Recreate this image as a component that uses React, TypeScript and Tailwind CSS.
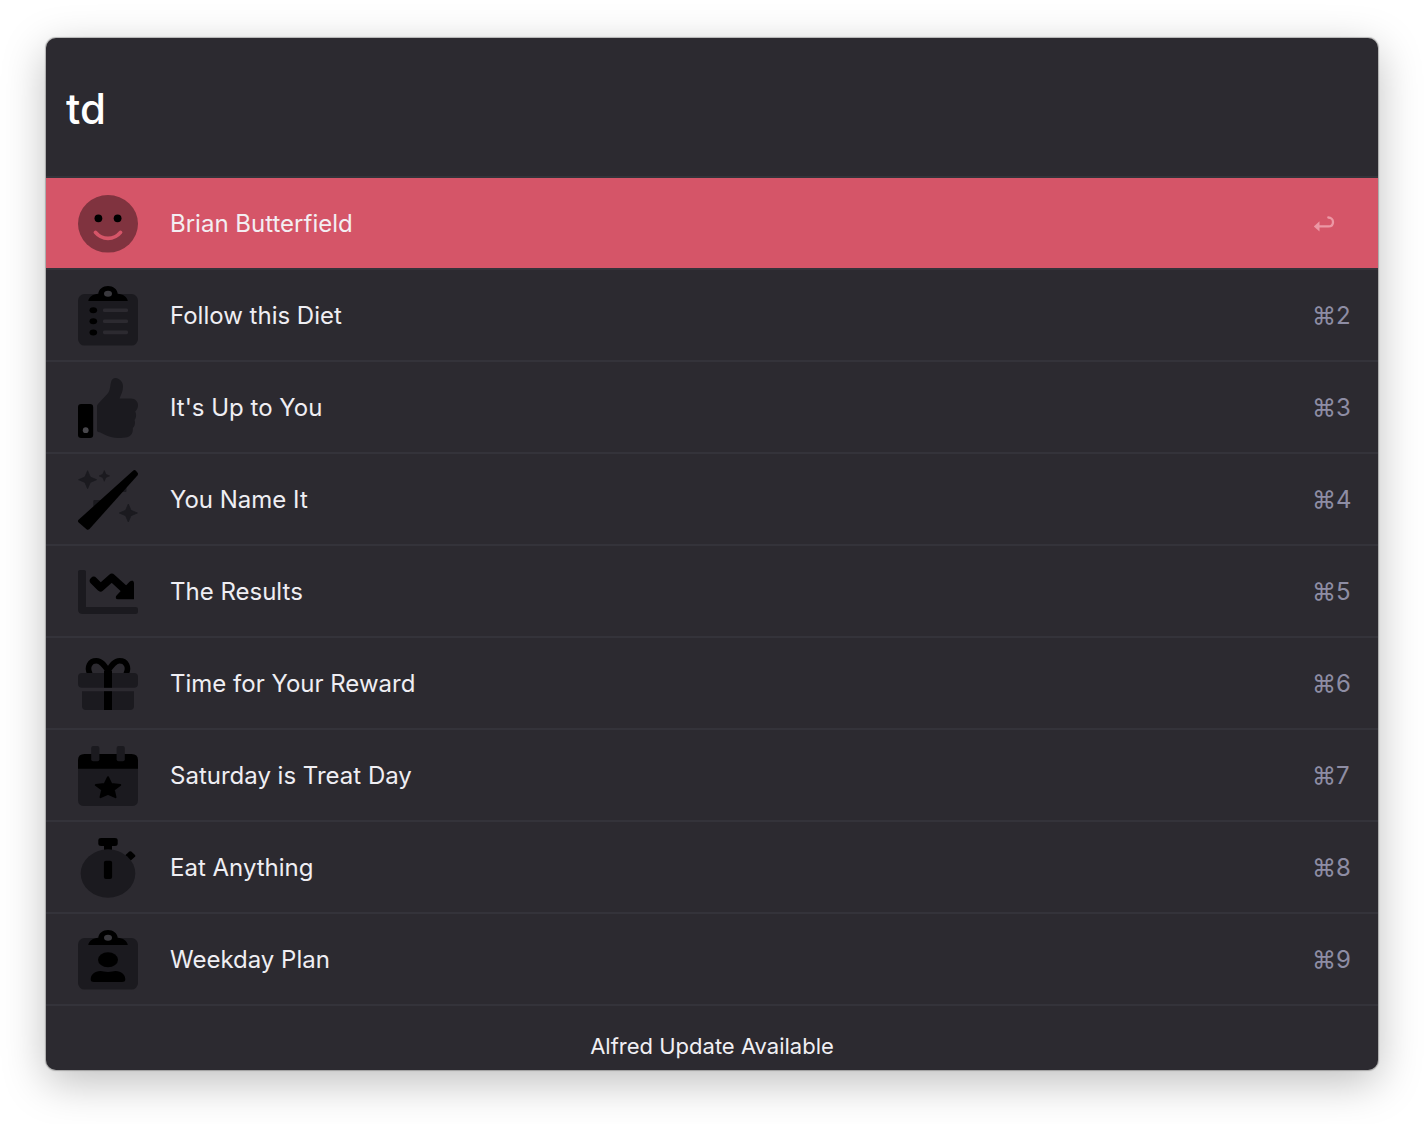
import type { ReactNode } from "react";

const DIM = "#1b1a1f";
const PANEL = "#2c2a30";

function Glyph({ children }: { children: ReactNode }) {
  return (
    <svg viewBox="0 0 60 60" className="size-15 shrink-0" fill="#000" aria-hidden="true">
      {children}
    </svg>
  );
}

function Clip() {
  return (
    <>
      <rect y="8" width="60" height="51.6" rx="6.5" fill={DIM} />
      <path d="M10.3 15C10.8 11 15 8 20.3 7.8C20.5 3.2 25 0 30 0s9.5 3.2 9.7 7.8C45 8 49.2 11 49.8 15Z" />
      <ellipse cx="30" cy="7.7" rx="4" ry="3" fill="#3a393e" />
    </>
  );
}

const star4 = (x: number, y: number, r: number) => {
  const k = r * 0.3;
  return `M${x} ${y - r}L${x + k} ${y - k}L${x + r} ${y}L${x + k} ${y + k}L${x} ${y + r}L${x - k} ${y + k}L${x - r} ${y}L${x - k} ${y - k}Z`;
};

const items: { title: string; icon: ReactNode }[] = [
  {
    title: "Brian Butterfield",
    icon: (
      <Glyph>
        <ellipse cx="30" cy="29.8" rx="30" ry="28.8" fill="#80333f" />
        <circle cx="20.4" cy="24.3" r="3.9" />
        <circle cx="39.6" cy="24.3" r="3.9" />
        <path d="M17.5 38.4C24 46.3 36 46.3 42.5 38.4" fill="none" stroke="#d55568" strokeWidth="3.8" strokeLinecap="round" />
      </Glyph>
    ),
  },
  {
    title: "Follow this Diet",
    icon: (
      <Glyph>
        <Clip />
        {[24.3, 35.3, 46.4].map((y) => (
          <g key={y}>
            <ellipse cx="15.3" cy={y} rx="3.8" ry="3" />
            <rect x="25" y={y - 1.8} width="25" height="3.6" rx="1.4" fill={PANEL} />
          </g>
        ))}
      </Glyph>
    ),
  },
  {
    title: "It's Up to You",
    icon: (
      <Glyph>
        <rect y="26" width="15.2" height="34" rx="3.2" />
        <circle cx="7.7" cy="52.2" r="2.9" fill="#48474c" />
        <path
          fill={DIM}
          d="M19 28.5Q19 27 20.2 25.8L29.5 15.8C32.5 12.2 32 7.5 33.2 3.5C33.8 1.2 35.4 0 37.5 0C42 .6 45 3.8 45 8.5C45 13 43.2 16.5 41.5 20.6H53C57 20.6 60 23.5 60 27.2C60 30 58.8 31.8 57.2 33.5C58.6 36.3 58.3 39.7 56.6 42C57.5 45.2 56.8 48.2 54.8 50C55.3 55.5 52.3 59 47.5 59.5C41.5 60.5 34.5 60.2 28.5 57.5C25.5 56 23 54.5 20.5 54Q19 53.7 19 52.3Z"
        />
      </Glyph>
    ),
  },
  {
    title: "You Name It",
    icon: (
      <Glyph>
        <path d={star4(9.6, 9.7, 9)} fill={DIM} stroke={DIM} strokeWidth="0.8" strokeLinejoin="round" />
        <path d={star4(26.3, 5.9, 5.3)} fill={DIM} stroke={DIM} strokeWidth="0.6" strokeLinejoin="round" />
        <path d={star4(50.3, 43, 9)} fill={DIM} stroke={DIM} strokeWidth="0.8" strokeLinejoin="round" />
        <rect x="15.3" y="30" width="8" height="7" rx="1" fill={DIM} />
        <rect x="40.5" y="15" width="8" height="7" rx="1" fill={DIM} />
        <path d="M55.3.6Q56.7-.5 57.9.7L59.6 2.7Q60.5 4 59.4 5.4L11.5 59Q10 60.3 8.5 59.2L.7 52.6Q-.7 51.2.6 49.7Z" />
      </Glyph>
    ),
  },
  {
    title: "The Results",
    icon: (
      <Glyph>
        <path d="M0 9.5Q0 8 2 8H6Q8 8 8 9.5V45H57.5Q60 45 60 47V50Q60 52 57.5 52H5Q0 52 0 47.5Z" fill={DIM} />
        <path d="M15.7 18.7L22.5 25.6L33.8 15.6L49 29.5" fill="none" stroke="#000" strokeWidth="7.8" strokeLinecap="round" strokeLinejoin="round" />
        <path d="M51.5 19.7Q53.2 18.3 54.8 18.8Q56 19.3 56 21.3V37.3H40Q38 37.3 37.8 35.7Q37.6 34.3 39 33Z" />
      </Glyph>
    ),
  },
  {
    title: "Time for Your Reward",
    icon: (
      <Glyph>
        <path
          d="M12 20C8.3 13 12 6.8 18.3 6.8C23.5 6.8 26.500 11.500 30 17C33.500 11.500 36.500 6.8 41.7 6.8C48 6.8 51.700 13 48 20"
          fill="none"
          stroke="#000"
          strokeWidth="5.6"
        />
        <rect y="19" width="60" height="14.7" rx="4" fill={DIM} />
        <path d="M4 37.2H56V52.3Q56 56 52 56H8Q4 56 4 52.3Z" fill={DIM} />
        <path d="M26 17H34V33.7H26ZM26 37.2H34V56H26Z" />
      </Glyph>
    ),
  },
  {
    title: "Saturday is Treat Day",
    icon: (
      <Glyph>
        <path d="M0 22H60V54Q60 60 53.5 60H6.5Q0 60 0 54Z" fill={DIM} />
        <path d="M0 22.7V14Q0 8 6.5 8H53.5Q60 8 60 14V22.7Z" />
        <rect x="13.2" width="8.2" height="15.2" rx="2" fill={DIM} />
        <rect x="38.6" width="8.2" height="15.2" rx="2" fill={DIM} />
        <path
          d="M30 31.2L33.3 38L42.2 39L35.8 43.8L37.5 51.2L30 47.8L22.5 51.2L24.2 43.8L17.8 39L26.7 38Z"
          stroke="#000"
          strokeWidth="2"
          strokeLinejoin="round"
        />
      </Glyph>
    ),
  },
  {
    title: "Eat Anything",
    icon: (
      <Glyph>
        <path d="M23 0H37Q39.7 0 39.7 2V6Q39.7 8 37 8H34V13H26V8H23Q20.3 8 20.3 6V2Q20.3 0 23 0Z" />
        <path d="M51.3 13.6Q52.3 12.8 53.3 13.6L57 16.9Q57.9 17.8 57 18.7L53.3 22Q52.3 22.8 51.3 22L47.5 18.5V17Z" />
        <ellipse cx="30" cy="35.5" rx="27.3" ry="24.2" fill={DIM} />
        <rect x="25.9" y="22.7" width="8.2" height="18.4" rx="2" />
      </Glyph>
    ),
  },
  {
    title: "Weekday Plan",
    icon: (
      <Glyph>
        <Clip />
        <ellipse cx="30" cy="29.8" rx="10" ry="7.5" />
        <path d="M22.5 41C25 41 26.5 42 30 42S35 41 37.5 41C43.5 41.3 47.3 44.5 47.3 49.5Q47.3 52 44 52H16Q12.7 52 12.7 49.5C12.7 44.5 16.5 41.3 22.5 41Z" />
      </Glyph>
    ),
  },
];

function ReturnKey() {
  return (
    <svg viewBox="0 0 22 18" className="mr-3.5 h-[18px] w-[22px]" fill="none" aria-label="Return" role="img">
      <path d="M6 11.4H15.5C18.5 11.4 20 9.3 20 6.9C20 4.3 18 2.5 15.3 2.5" stroke="#ec97a4" strokeWidth="2.3" strokeLinecap="round" />
      <path d="M.8 11.4L6.5 6.2V16.6Z" fill="#ec97a4" />
    </svg>
  );
}

export default function App() {
  return (
    <div className="bg-white px-[46px] pt-[38px] pb-[54px] font-['Inter','Liberation_Sans',sans-serif]">
      <main className="overflow-hidden rounded-[10px] bg-[#2c2a30] shadow-[0_0_1px_1px_rgba(0,0,0,0.25),0_12px_44px_rgba(0,0,0,0.26)]">
        <div className="border-b-2 border-[#34333a] pt-[38px] pb-9">
          <input
            type="text"
            aria-label="Search"
            defaultValue="td"
            className="block h-16 w-full bg-transparent px-5 text-[42px] font-medium text-white outline-none"
          />
        </div>
        <ul>
          {items.map((item, i) => (
            <li key={item.title} className="border-b-2 border-[#34333a]">
              <button
                type="button"
                className={
                  i === 0
                    ? "flex h-[90px] w-full items-center bg-[#d55568] pt-0.5 pr-[29px] pl-8 text-left text-2xl text-[#f3eef2]"
                    : "flex h-[90px] w-full items-center pt-0.5 pr-[29px] pl-8 text-left text-2xl text-[#efeef3]"
                }
              >
                {item.icon}
                <span className="ml-8 flex-1">{item.title}</span>
                {i === 0 ? <ReturnKey /> : <span className="w-[37px] whitespace-nowrap text-[#8e8da4]">⌘{i + 1}</span>}
              </button>
            </li>
          ))}
        </ul>
        <footer className="flex h-16 items-center justify-center pt-4">
          <a href="#update" className="text-[22px] text-[#f0eff3]">
            Alfred Update Available
          </a>
        </footer>
      </main>
    </div>
  );
}
